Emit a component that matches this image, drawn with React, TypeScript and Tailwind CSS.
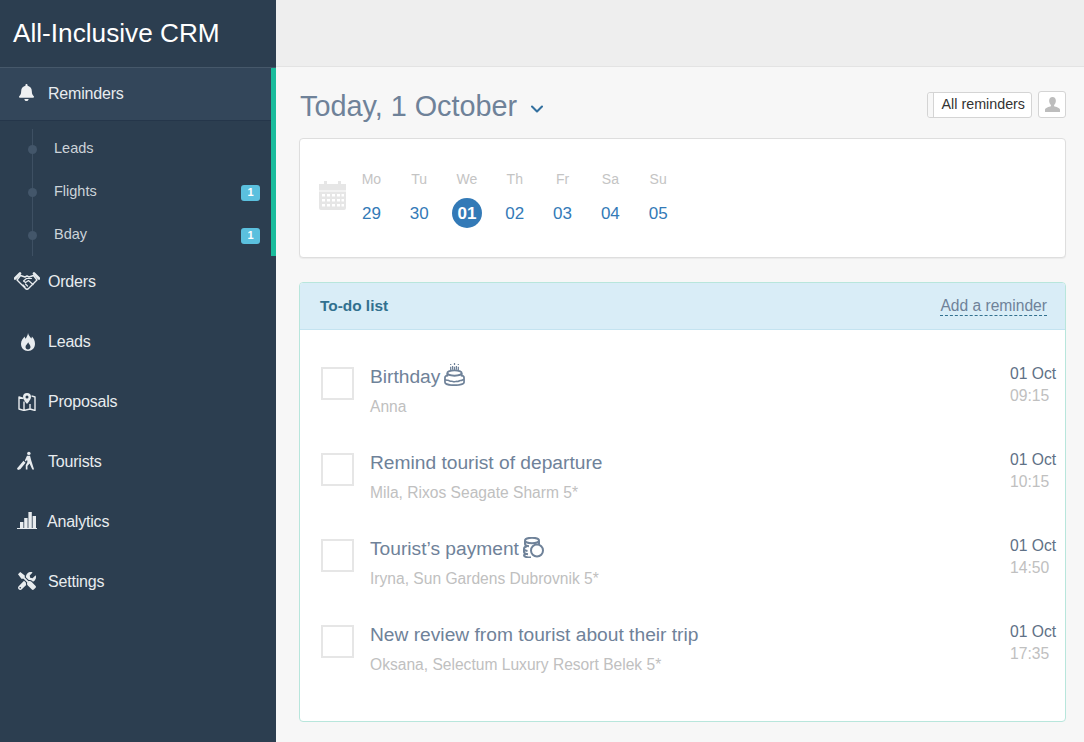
import React from 'react';
import { FaBell, FaTools } from 'react-icons/fa';
import { FiChevronDown } from 'react-icons/fi';

const BarsIcon = ({ className }: { className?: string }) => (
  <svg viewBox="0 0 20 17" className={className} fill="currentColor">
    <rect x="3" y="10" width="3.4" height="6" />
    <rect x="7.2" y="6" width="3.4" height="10" />
    <rect x="11.4" y="0" width="3.4" height="16" />
    <rect x="15.6" y="4" width="3.4" height="12" />
    <rect x="0" y="16" width="20" height="1" />
  </svg>
);

const ShakeIcon = ({ className }: { className?: string }) => (
  <svg viewBox="0 0 26 18" className={className} fill="none" stroke="currentColor" strokeLinecap="round" strokeLinejoin="round">
    <path d="M1 6.5 6 1.5M25 6.5 20 1.5" strokeWidth="2.6" />
    <path d="M6.5 3.5 11 5l2-1 2 1 4.5-1.5L23 8l-8.5 8.5a2 2 0 0 1-3 0L3 8z" strokeWidth="1.4" />
    <path d="M17.5 6.5h-5L9.5 9l2 1.5 3-2 4.5 4M9 13l2 2M11.5 12l2 2" strokeWidth="1.2" />
  </svg>
);

const FlameIcon = ({ className }: { className?: string }) => (
  <svg viewBox="0 0 14 18" className={className} fill="currentColor">
    <path fillRule="evenodd" d="M7 0c.6 2.800 2 3.700 3.300 5.500.4-.6.600-1.300.6-2C12.800 5.400 14 8 14 10.800 14 15 11 18 7 18s-7-3-7-7.200C0 7.400 2.200 5.500 3.600 3.500c.2.900.4 1.500 1 2.200C5.600 4 6.800 2.400 7 0zm.2 9.200C6.800 10.700 4.500 11.800 4.500 14c0 1.500 1.100 2.500 2.500 2.500s2.500-1 2.500-2.500c0-2-1.700-3-2.300-4.800z" />
  </svg>
);

const MapIcon = ({ className }: { className?: string }) => (
  <svg viewBox="0 0 18 18" className={className} fill="none" stroke="currentColor">
    <path d="M5.5 5.5 1 4v12l5 1.5 6-1.5 5 1.5V4l-3.5-1.2M6 17.5v-9M12 16v-5" strokeWidth="1.4" strokeLinejoin="round" />
    <path fillRule="evenodd" fill="currentColor" stroke="none" d="M9 0a4 4 0 0 1 4 4c0 2.6-4 7-4 7S5 6.600 5 4a4 4 0 0 1 4-4zm0 2.500A1.500 1.500 0 1 0 9 5.500 1.500 1.500 0 0 0 9 2.500z" />
  </svg>
);

const TouristIcon = ({ className }: { className?: string }) => (
  <svg viewBox="0 0 20 20" className={className} fill="currentColor">
    <circle cx="12.500" cy="2" r="1.800" />
    <path d="M10.500 4.500h3.200l1.300 5 3 9.500h-1.900l-2.900-6.500-2.200 2.800V19H9.300l-.1-4.500 1.800-3.500-.4-2.200-1.300 1.600-1.100-.9z" />
    <path d="m6.800 9.800 2.200 2L3.500 18.800 1 19.500 0 17.800z" />
  </svg>
);

const CalendarIcon = ({ className }: { className?: string }) => (
  <svg viewBox="0 0 27 29" className={className} fill="currentColor">
    <path d="M0 3h5V0h3v3h11V0h3v3h5v6.500H0z" />
    <path fillRule="evenodd" d="M0 10.500h27V27a2 2 0 0 1-2 2H2a2 2 0 0 1-2-2zM3 13v2.500h3V13zm5 0v2.500h3V13zm5 0v2.500h3V13zm5 0v2.500h3V13zm4.500 0v2.500H25V13zM3 18v2.500h3V18zm5 0v2.500h3V18zm5 0v2.500h3V18zm5 0v2.500h3V18zm4.500 0v2.500H25V18zM3 23v2.500h3V23zm5 0v2.500h3V23zm5 0v2.500h3V23zm5 0v2.500h3V23zm4.500 0v2.500H25V23z" />
  </svg>
);

const PersonIcon = ({ className }: { className?: string }) => (
  <svg viewBox="0 0 16 16" className={className} fill="currentColor">
    <path d="M8 0c2.300 0 3.600 1.700 3.600 4 0 2-.9 3.600-1.900 4.400v1.400c1.800.6 6.300 1.700 6.300 3.700V16H0v-2.500c0-2 4.500-3.100 6.300-3.700V8.400C5.300 7.600 4.400 6 4.400 4 4.400 1.700 5.700 0 8 0z" />
  </svg>
);

const CakeIcon = ({ className }: { className?: string }) => (
  <svg viewBox="0 0 22 24" className={className} fill="none" stroke="currentColor">
    <path d="M7 1v1M11 0v2M15 1v1M7 4v4M11 4v4M15 4v4M9 3v4M13 3v4" strokeWidth="1.300" />
    <ellipse cx="11" cy="10.500" rx="7.500" ry="2.800" strokeWidth="1.900" />
    <path d="M3.500 10.500V14M18.500 10.500V14" strokeWidth="1.800" />
    <path d="M3.500 13C1.500 13.500 1 14.500 1 15.500V20c0 1.800 4.500 3.200 10 3.200s10-1.400 10-3.200v-4.500c0-1-.5-2-2.500-2.500" strokeWidth="1.800" />
    <path d="M1 17c1.500 2 2.500.5 4 1.300 1.500 1.400 2.500.2 4 .9 1.500 1 2.500.2 4 0 1.500.6 2.500-.4 4-.9 1.500.3 2.500-.6 4-1.300" strokeWidth="1.600" />
  </svg>
);

const CoinsIcon = ({ className }: { className?: string }) => (
  <svg viewBox="0 0 21 21" className={className} fill="none" stroke="currentColor" strokeWidth="2">
    <ellipse cx="9" cy="3.500" rx="7" ry="2.700" />
    <path d="M2 4v3c0 1 1.500 2 4 2.300M16 4v3.500" />
    <path d="M4 9.300C2 9.800 1 10.700 1 11.700c0 1 1.200 1.800 3.500 2.200M1 12v3c0 1 1.300 1.900 4 2.200M2.500 17c-1 .5-1.500 1-1.500 1.500C1 19.500 3.500 20.500 8 20.500" />
    <circle cx="14" cy="13.500" r="6" strokeWidth="2" />
  </svg>
);

const subItems = [
  { label: 'Leads', badge: 0 },
  { label: 'Flights', badge: 1 },
  { label: 'Bday', badge: 1 },
];

const menu = [
  { label: 'Orders', icon: <ShakeIcon className="w-[26px] h-[18px] -ml-[4px] -mt-[3px] shrink-0" /> },
  { label: 'Leads', icon: <FlameIcon className="w-[14px] h-[18px] ml-[3px] -mt-[1px]" /> },
  { label: 'Proposals', icon: <MapIcon className="w-[18px] h-[18px] -mt-[1px]" /> },
  { label: 'Tourists', icon: <TouristIcon className="w-[19px] h-[20px] -ml-[1px] -mt-[3px]" /> },
  { label: 'Analytics', icon: <BarsIcon className="w-[20px] h-[17px] -ml-[1px] -mt-[3px]" />, tight: true },
  { label: 'Settings', icon: <FaTools className="text-[18px] -mt-[2px]" /> },
];

const days = [
  ['Mo', '29'],
  ['Tu', '30'],
  ['We', '01'],
  ['Th', '02'],
  ['Fr', '03'],
  ['Sa', '04'],
  ['Su', '05'],
];

const todos = [
  { title: 'Birthday', who: 'Anna', time: '09:15', icon: <CakeIcon className="w-[21px] h-[23px] -mt-[5px]" /> },
  { title: 'Remind tourist of departure', who: 'Mila, Rixos Seagate Sharm 5*', time: '10:15' },
  { title: 'Tourist’s payment', who: 'Iryna, Sun Gardens Dubrovnik 5*', time: '14:50', icon: <CoinsIcon className="w-[21px] h-[21px] -mt-[4px]" /> },
  { title: 'New review from tourist about their trip', who: 'Oksana, Selectum Luxury Resort Belek 5*', time: '17:35' },
];

const Sidebar = () => (
  <aside className="w-[276px] shrink-0 bg-[#2c3e50] text-[#e8ecef]">
    <div className="h-[68px] flex items-center pl-[13px] text-[26.2px] text-white border-b border-[#46586a]">All-Inclusive CRM</div>
    <div className="border-r-[5px] border-[#1abc9c]">
      <div className="h-[53px] flex items-center pl-[18px] bg-[#33465a] border-b border-[#25364a]">
        <span className="w-[30px]"><FaBell className="text-[17px] text-[#eef0f2] -mt-[3px]" /></span>
        <span className="text-[16px] tracking-[-0.2px]">Reminders</span>
      </div>
      <div className="relative h-[135px] flex flex-col pt-[6px]">
        <div className="absolute left-[32px] top-[8px] bottom-0 w-px bg-[#3e5063]" />
        {subItems.map((s) => (
          <div key={s.label} className="relative h-[43px] flex items-center pl-[54px] pr-[11px] text-[14.5px] text-[#ccd3d9]">
            <span className="absolute left-[28px] top-[18px] w-[9px] h-[9px] rounded-full bg-[#43566a]" />
            <span className="flex-1">{s.label}</span>
            {s.badge > 0 && (
              <span className="w-[19px] h-[16px] mt-[2px] rounded-[3px] bg-[#5bc0de] text-white text-[11px] font-bold flex items-center justify-center">{s.badge}</span>
            )}
          </div>
        ))}
      </div>
    </div>
    <div className="flex flex-col -mt-[4px]">
      {menu.map((m) => (
        <div key={m.label} className="h-[60px] flex items-center pl-[18px] text-[16px] tracking-[-0.2px]">
          <span className={`${m.tight ? 'w-[29px]' : 'w-[30px]'} flex items-center`}>{m.icon}</span>
          <span>{m.label}</span>
        </div>
      ))}
    </div>
  </aside>
);

export default function App() {
  return (
    <div className="w-[1084px] h-[742px] flex overflow-hidden bg-[#f7f7f7] font-['Liberation_Sans',Arial,sans-serif]">
      <Sidebar />
      <main className="flex-1 min-w-0">
        <div className="h-[67px] bg-[#eeeeee] border-b border-[#e3e3e3]" />
        <div className="pl-[23px] pr-[18px]">
          <div className="h-[71px] flex items-center justify-between pt-[9px]">
            <div className="flex items-center ml-[1px] text-[#6f8299] text-[28.8px]">
              Today, 1 October
              <FiChevronDown className="text-[#33709f] text-[20px] ml-[10px] mt-[3px]" strokeWidth={2.5} />
            </div>
            <div className="flex items-center gap-[6px] -mt-[5px]">
              <div className="h-[26px] flex items-stretch border border-[#d4d4d4] rounded-[3px] bg-white text-[#333] text-[14.3px]">
                <span className="w-[6px] bg-[#f7f7f7] border-r border-[#d4d4d4] rounded-l-[3px]" />
                <span className="pl-[8px] pr-[6px] pt-[1px] flex items-center">All reminders</span>
              </div>
              <div className="w-[28px] h-[27px] border border-[#d4d4d4] rounded-[3px] bg-white flex items-center justify-center text-[#bdbdbd]">
                <PersonIcon className="w-[15px] h-[15px]" />
              </div>
            </div>
          </div>
          <section className="h-[120px] bg-white border border-[#dedede] rounded-[4px] shadow-[0_1px_1px_rgba(0,0,0,0.05)] flex items-center pl-[19px]">
            <CalendarIcon className="text-[#e6e6e6] w-[27px] h-[29px] -mt-[5px] shrink-0" />
            <div className="flex ml-[1.5px]">
              {days.map(([d, n]) => (
                <div key={d} className="w-[47.8px] flex flex-col items-center">
                  <span className="text-[14px] text-[#c4c4c4] leading-[20px]">{d}</span>
                  <span className={`mt-[9px] w-[30px] h-[30px] pt-[2px] rounded-full flex items-center justify-center text-[17px] ${n === '01' ? 'bg-[#337ab7] text-white font-bold' : 'text-[#337ab7]'}`}>{n}</span>
                </div>
              ))}
            </div>
          </section>
          <section className="mt-[24px] h-[440px] bg-white border border-[#b8e6dc] rounded-[4px] overflow-hidden">
            <div className="h-[47px] flex items-center justify-between pl-[20px] pr-[18px] bg-[#d9edf7] border-b border-[#c4e3f0]">
              <span className="text-[15.4px] font-bold text-[#31708f]">To-do list</span>
              <span className="text-[15.6px] text-[#6f8299] border-b border-dashed border-[#31708f] leading-[18px]">Add a reminder</span>
            </div>
            <div className="pt-[23px]">
              {todos.map((t) => (
                <div key={t.title} className="h-[86px] flex items-start pl-[21px] pr-[9px]">
                  <span className="w-[33px] h-[33px] mt-[14px] border-2 border-[#e6e6e6] shrink-0" />
                  <div className="ml-[16px] flex-1">
                    <div className="flex items-center gap-[4px] text-[19.2px] leading-[24px] text-[#6f8299] mt-[12px]">
                      {t.title}
                      {t.icon}
                    </div>
                    <div className="text-[15.6px] leading-[20px] mt-[8px] text-[#c0c0c0]">{t.who}</div>
                  </div>
                  <div className="w-[46px] mt-[10px] text-[15.7px] leading-[22px] whitespace-nowrap">
                    <div className="text-[#5f7186]">01 Oct</div>
                    <div className="text-[#c0c0c0]">{t.time}</div>
                  </div>
                </div>
              ))}
            </div>
          </section>
        </div>
      </main>
    </div>
  );
}
